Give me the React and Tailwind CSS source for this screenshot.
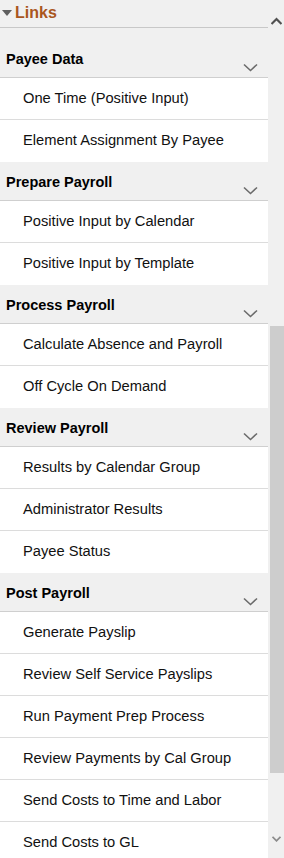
import React from "react";

const sections = [
  { title: "Payee Data", items: ["One Time (Positive Input)", "Element Assignment By Payee"] },
  { title: "Prepare Payroll", items: ["Positive Input by Calendar", "Positive Input by Template"] },
  { title: "Process Payroll", items: ["Calculate Absence and Payroll", "Off Cycle On Demand"] },
  { title: "Review Payroll", items: ["Results by Calendar Group", "Administrator Results", "Payee Status"] },
  {
    title: "Post Payroll",
    items: [
      "Generate Payslip",
      "Review Self Service Payslips",
      "Run Payment Prep Process",
      "Review Payments by Cal Group",
      "Send Costs to Time and Labor",
      "Send Costs to GL",
    ],
  },
];

const Chevron = () => (
  <svg width="15" height="9" viewBox="0 0 15 9" className="shrink-0">
    <path d="M1 1.5 L7.5 7.5 L14 1.5" fill="none" stroke="#6b6b6b" strokeWidth="1.6" />
  </svg>
);

const SectionHeader = ({ title, first }) => (
  <div
    className={
      "flex justify-between bg-[#f0f0f0] border-b border-[#cfcfcf] pl-[6px] pr-[10px] " +
      (first ? "h-[50px] pt-[23px]" : "h-[39px] pt-[12px]")
    }
  >
    <span className="text-[14.5px] leading-[16px] font-bold text-black">{title}</span>
    <div className="pt-[12px]">
      <Chevron />
    </div>
  </div>
);

const Item = ({ label, last }) => (
  <div
    className={
      "h-[42px] bg-white flex items-center pl-[23px] pb-[1px] text-[14.7px] text-[#111] " +
      (last ? "" : "border-b border-[#dcdcdc]")
    }
  >
    {label}
  </div>
);

export default function App() {
  return (
    <div
      className="w-[284px] h-[858px] flex bg-[#f0f0f0] overflow-hidden"
      style={{ fontFamily: '"Liberation Sans", Arial, sans-serif' }}
    >
      <div className="w-[268px] shrink-0">
        {/* Links header */}
        <div className="h-[28px] border-b border-[#c8c8c8] flex items-center gap-[3px] pl-[2px] pb-[2px]">
          <svg width="10" height="6" viewBox="0 0 10 6">
            <path d="M0 0 L10 0 L5 6 Z" fill="#5f5f5f" />
          </svg>
          <span className="text-[16px] font-bold text-[#a9561d]">Links</span>
        </div>
        {sections.map((s, si) => (
          <div key={s.title}>
            <SectionHeader title={s.title} first={si === 0} />
            {s.items.map((it, i) => (
              <Item key={it} label={it} last={i === s.items.length - 1} />
            ))}
          </div>
        ))}
      </div>

      {/* Scrollbar */}
      <div className="w-[16px] flex flex-col items-center">
        <div className="pt-[17px] h-[326px]">
          <svg width="11" height="8" viewBox="0 0 11 8">
            <path d="M0.5 7 L5.5 2 L10.5 7" fill="none" stroke="#505050" strokeWidth="2.2" />
          </svg>
        </div>
        <div className="w-[14px] h-[447px] bg-[#cdcdcd] ml-[1px]" />
        <div className="flex-1 flex items-end pb-[16px]">
          <svg width="9" height="6" viewBox="0 0 9 6">
            <path d="M0.5 0.8 L4.5 4.8 L8.5 0.8" fill="none" stroke="#8c8c8c" strokeWidth="1.8" />
          </svg>
        </div>
      </div>
    </div>
  );
}
